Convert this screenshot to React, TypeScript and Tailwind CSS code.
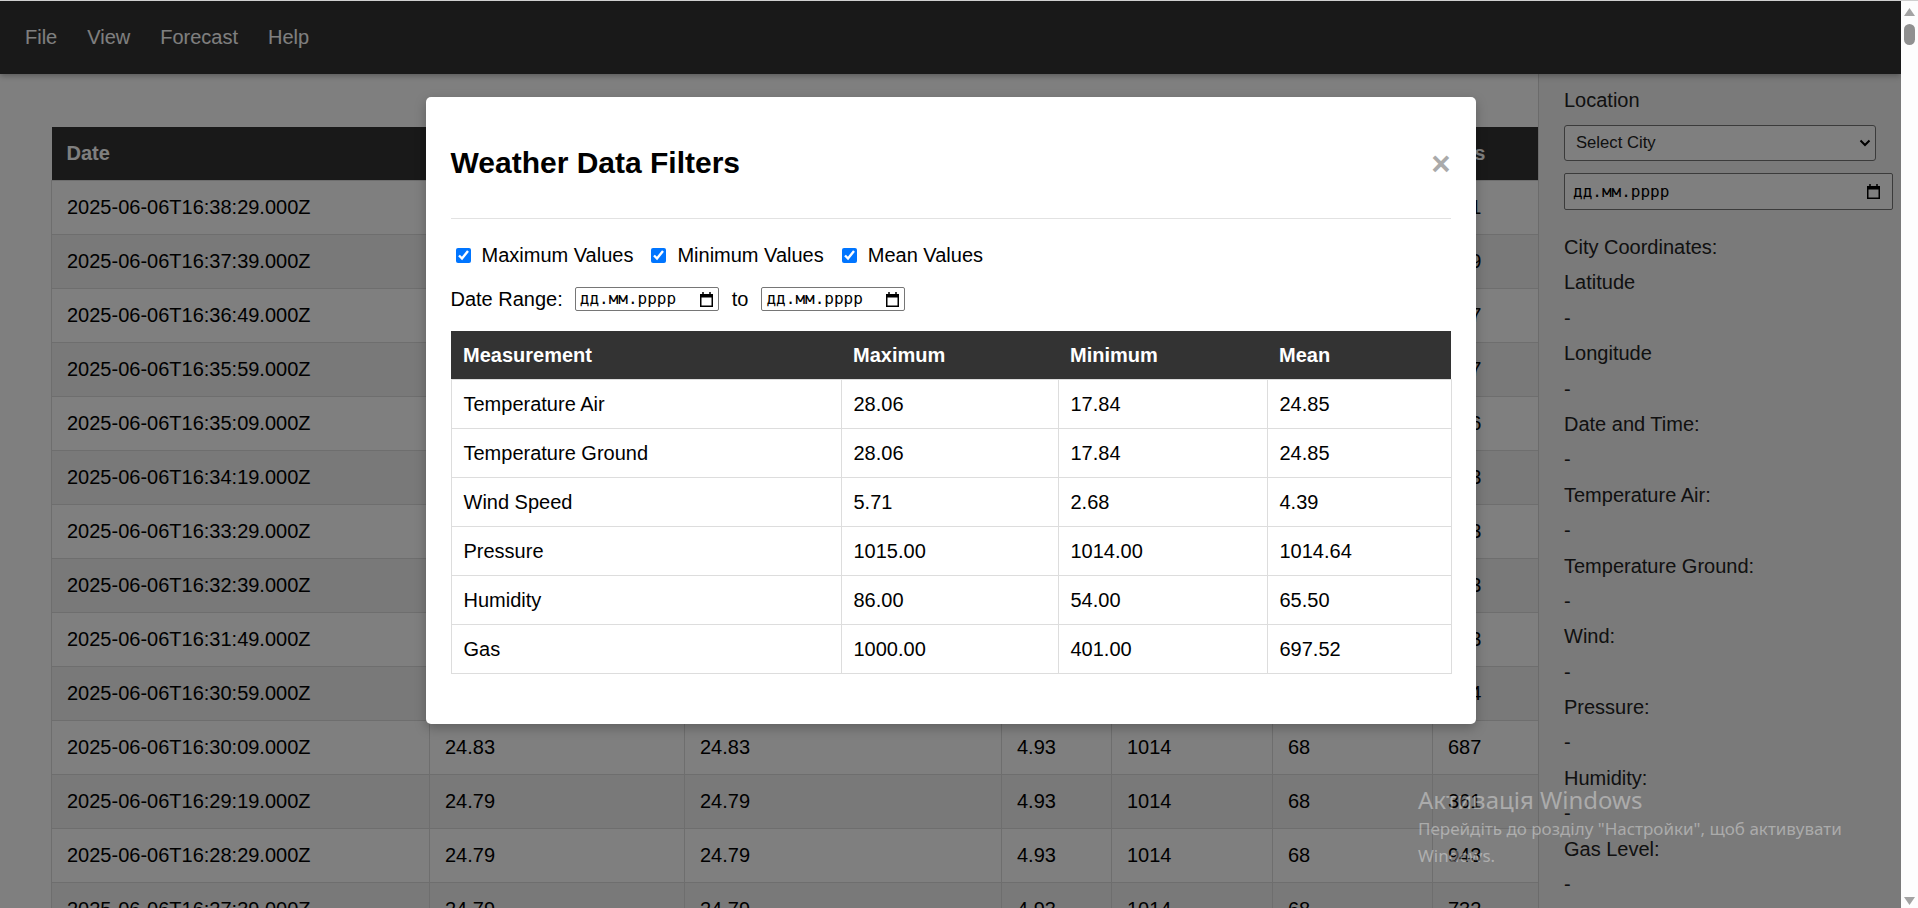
import React from 'react';

const mainColumns = ['Date', 'Temperature Air', 'Temperature Ground', 'Wind', 'Pressure', 'Humidity', 'Gas'];
const mainWidths = [378, 255, 317, 110, 161, 160, 106];

const mainRows: string[][] = [
    ['2025-06-06T16:38:29.000Z', '24.91', '24.91', '4.98', '1014', '67', '521'],
    ['2025-06-06T16:37:39.000Z', '24.91', '24.91', '4.98', '1014', '67', '489'],
    ['2025-06-06T16:36:49.000Z', '24.88', '24.88', '4.96', '1014', '67', '617'],
    ['2025-06-06T16:35:59.000Z', '24.88', '24.88', '4.96', '1014', '67', '457'],
    ['2025-06-06T16:35:09.000Z', '24.86', '24.86', '4.95', '1014', '68', '936'],
    ['2025-06-06T16:34:19.000Z', '24.86', '24.86', '4.95', '1014', '68', '823'],
    ['2025-06-06T16:33:29.000Z', '24.85', '24.85', '4.94', '1014', '68', '403'],
    ['2025-06-06T16:32:39.000Z', '24.85', '24.85', '4.94', '1014', '68', '653'],
    ['2025-06-06T16:31:49.000Z', '24.83', '24.83', '4.93', '1014', '68', '513'],
    ['2025-06-06T16:30:59.000Z', '24.83', '24.83', '4.93', '1014', '68', '744'],
    ['2025-06-06T16:30:09.000Z', '24.83', '24.83', '4.93', '1014', '68', '687'],
    ['2025-06-06T16:29:19.000Z', '24.79', '24.79', '4.93', '1014', '68', '361'],
    ['2025-06-06T16:28:29.000Z', '24.79', '24.79', '4.93', '1014', '68', '943'],
    ['2025-06-06T16:27:39.000Z', '24.79', '24.79', '4.93', '1014', '68', '732'],
    ['2025-06-06T16:26:49.000Z', '24.76', '24.76', '4.91', '1014', '68', '588'],
];

const stats = [
    ['Temperature Air', '28.06', '17.84', '24.85'],
    ['Temperature Ground', '28.06', '17.84', '24.85'],
    ['Wind Speed', '5.71', '2.68', '4.39'],
    ['Pressure', '1015.00', '1014.00', '1014.64'],
    ['Humidity', '86.00', '54.00', '65.50'],
    ['Gas', '1000.00', '401.00', '697.52'],
];

const sidebarLines = [
    'City Coordinates:', 'Latitude', '-', 'Longitude', '-', 'Date and Time:', '-',
    'Temperature Air:', '-', 'Temperature Ground:', '-', 'Wind:', '-',
    'Pressure:', '-', 'Humidity:', '-', 'Gas Level:', '-',
];

function CalendarIcon() {
    return (
        <svg width="13" height="15" viewBox="0 0 13 15" fill="none">
            <rect x="0.75" y="2.75" width="11.5" height="11.5" stroke="#000" strokeWidth="1.5" />
            <rect x="0" y="2" width="13" height="3.5" fill="#000" />
            <rect x="2.25" y="0" width="1.5" height="3" fill="#000" />
            <rect x="9.25" y="0" width="1.5" height="3" fill="#000" />
        </svg>
    );
}

function DateField({ className }: { className: string }) {
    return (
        <div className={`flex items-center justify-between bg-white border border-[#767676] rounded-[2px] ${className}`}>
            <span className="font-['DejaVu_Sans_Mono',monospace] text-[16px] leading-none text-black">дд.мм.рррр</span>
            <CalendarIcon />
        </div>
    );
}

function Check({ label }: { label: string }) {
    return (
        <label className="flex items-center mr-[13px]">
            <input type="checkbox" defaultChecked className="w-[15px] h-[15px] ml-[5px] mr-[11px]" />
            {label}
        </label>
    );
}

export default function App() {
    return (
        <div className="relative flex flex-col w-[1918px] h-[908px] overflow-hidden bg-white font-['Liberation_Sans',Arial,sans-serif] text-black">
            <div className="h-px bg-[#cfcfcf]" />

            <div className="flex flex-1 min-h-0">
                <div className="relative flex flex-col w-[1901px] overflow-hidden">
                    <nav className="relative z-10 h-[73px] shrink-0 bg-[#333] flex items-center px-[10px] pb-[1px] shadow-[0_2px_6px_rgba(0,0,0,0.3)]">
                        {['File', 'View', 'Forecast', 'Help'].map((item) => (
                            <span key={item} className="px-[15px] text-[20px] text-white">{item}</span>
                        ))}
                    </nav>

                    <div className="flex flex-1 min-h-0">
                        <main className="flex-1 pl-[51px] pt-[53px] overflow-hidden">
                            <table className="border-collapse table-fixed w-[1487px] text-[20px] leading-[23px]">
                                <colgroup>
                                    {mainWidths.map((w, i) => (
                                        <col key={i} style={{ width: w }} />
                                    ))}
                                </colgroup>
                                <thead>
                                    <tr>
                                        {mainColumns.map((c) => (
                                            <th key={c} className="bg-[#333] text-white font-bold text-left p-[15px] whitespace-nowrap overflow-hidden">{c}</th>
                                        ))}
                                    </tr>
                                </thead>
                                <tbody>
                                    {mainRows.map((row, i) => (
                                        <tr key={i} className={i % 2 === 1 ? 'bg-[#f2f2f2]' : 'bg-white'}>
                                            {row.map((cell, j) => (
                                                <td key={j} className="border border-[#ddd] p-[15px] whitespace-nowrap">{cell}</td>
                                            ))}
                                        </tr>
                                    ))}
                                </tbody>
                            </table>
                        </main>

                        <aside className="w-[363px] shrink-0 bg-[#f4f4f4] border-l border-[#d6d6d6] pl-[25px] pt-[15px] text-[20px] leading-[23px] text-[#222]">
                            <div>Location</div>
                            <div className="mt-[13px] w-[312px] h-[36px] bg-white border border-[#767676] rounded-[3px] flex items-center justify-between pl-[11px] pr-[4px] text-[16.67px] leading-none">
                                <span>Select City</span>
                                <svg width="12" height="8" viewBox="0 0 12 8" fill="none">
                                    <path d="M1.5 1.5 6 6l4.5-4.5" stroke="#000" strokeWidth="2" />
                                </svg>
                            </div>
                            <DateField className="mt-[12px] w-[329px] h-[37px] pl-[8px] pr-[12px]" />
                            <div className="mt-[26px]">
                                {sidebarLines.map((line, i) => (
                                    <div key={i} className="mb-[12.4px]">{line}</div>
                                ))}
                            </div>
                        </aside>
                    </div>

                    <div className="absolute inset-0 z-20 bg-black/50 flex justify-center items-start pt-[96px]">
                        <div className="w-[1050px] bg-white rounded-[5px] px-[25px] pt-[25px] pb-[25px] shadow-[0_4px_12px_rgba(0,0,0,0.25)]">
                            <div className="flex items-center justify-between border-b border-[#e2e2e2] pb-[13px]">
                                <h2 className="mt-[23px] mb-[25px] text-[30px] leading-[35px] font-bold">Weather Data Filters</h2>
                                <span className="text-[33px] leading-none font-bold text-[#aaa]">×</span>
                            </div>

                            <div className="mt-[25px] h-[23px] flex items-center text-[20px] leading-[23px]">
                                <Check label="Maximum Values" />
                                <Check label="Minimum Values" />
                                <Check label="Mean Values" />
                            </div>

                            <div className="mt-[20px] h-[24px] flex items-center text-[20px] leading-[23px]">
                                <span>Date Range:</span>
                                <DateField className="ml-[12px] w-[144px] h-[24px] pl-[4px] pr-[5px]" />
                                <span className="mx-[13px]">to</span>
                                <DateField className="w-[144px] h-[24px] pl-[4px] pr-[5px]" />
                            </div>

                            <table className="mt-[20px] mb-[25px] w-full border-collapse table-fixed text-[20px] leading-[23px]">
                                <colgroup>
                                    <col style={{ width: 390 }} />
                                    <col style={{ width: 217 }} />
                                    <col style={{ width: 209 }} />
                                    <col style={{ width: 184 }} />
                                </colgroup>
                                <thead>
                                    <tr>
                                        {['Measurement', 'Maximum', 'Minimum', 'Mean'].map((h) => (
                                            <th key={h} className="bg-[#333] text-white font-bold text-left px-[12px] py-[12.5px]">{h}</th>
                                        ))}
                                    </tr>
                                </thead>
                                <tbody>
                                    {stats.map((row) => (
                                        <tr key={row[0]}>
                                            {row.map((cell, j) => (
                                                <td key={j} className="border border-[#ddd] px-[12px] py-[12.5px]">{cell}</td>
                                            ))}
                                        </tr>
                                    ))}
                                </tbody>
                            </table>
                        </div>
                    </div>
                </div>

                <div className="w-[17px] shrink-0 bg-[#fdfdfd] flex flex-col items-center">
                    <svg className="mt-[7px]" width="11" height="8" viewBox="0 0 11 8">
                        <path d="M5.5 0 11 8H0z" fill="#a3a3a3" />
                    </svg>
                    <div className="mt-[8px] w-[11px] h-[21px] rounded-full bg-[#909090]" />
                    <div className="flex-1" />
                    <svg className="mb-[3px]" width="11" height="8" viewBox="0 0 11 8">
                        <path d="M0 0h11L5.5 8z" fill="#a3a3a3" />
                    </svg>
                </div>
            </div>

            <div className="absolute left-[1418px] top-[784px] z-30 pointer-events-none font-['Noto_Sans',sans-serif] text-[rgba(255,255,255,0.38)]">
                <div className="text-[24px] leading-[31px]">Активація Windows</div>
                <div className="text-[17px] leading-[27px]">Перейдіть до розділу "Настройки", щоб активувати</div>
                <div className="text-[17px] leading-[27px]">Windows.</div>
            </div>
        </div>
    );
}
